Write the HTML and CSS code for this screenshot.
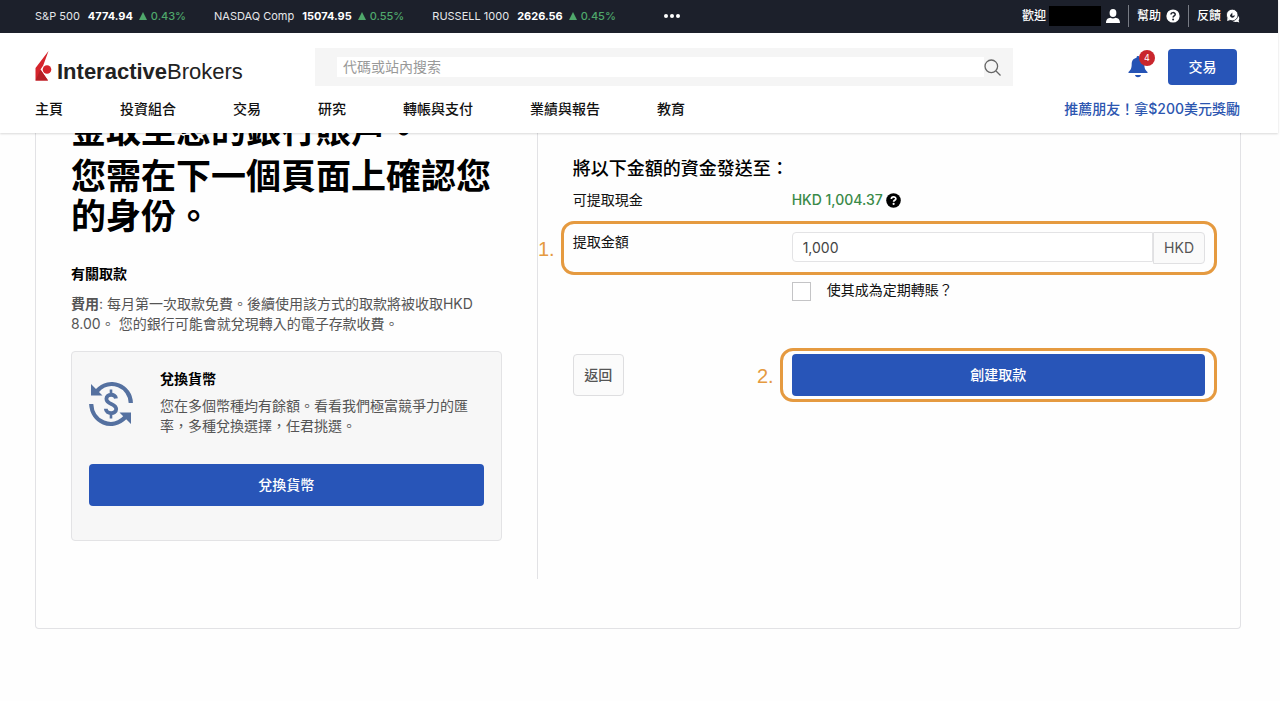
FILE: index.html
```html
<!DOCTYPE html>
<html lang="zh-Hant">
<head>
<meta charset="utf-8">
<meta name="viewport" content="width=device-width, initial-scale=1">
<title>InteractiveBrokers</title>
<link rel="stylesheet" href="styles.css">
</head>
<body>
<header class="header">
  <div class="topbar">
    <ul class="ticker">
      <li class="quote"><span>S&amp;P 500</span><b>4774.94</b><span class="up"><i class="arrow"></i>0.43%</span></li>
      <li class="quote"><span>NASDAQ Comp</span><b>15074.95</b><span class="up"><i class="arrow"></i>0.55%</span></li>
      <li class="quote"><span>RUSSELL 1000</span><b>2626.56</b><span class="up"><i class="arrow"></i>0.45%</span></li>
    </ul>
    <button class="more" type="button" aria-label="更多"><i class="dot"></i><i class="dot"></i><i class="dot"></i></button>
    <div class="account">
      <a class="account-link" href="#">歡迎<span class="username"></span>
        <svg width="14" height="14" viewBox="0 0 14 14" fill="#fff"><ellipse cx="7" cy="4" rx="3.4" ry="4"/><path d="M0 14c0-3.6 2-5 4.4-5.2 1.6 1 3.6 1 5.2 0C12 9 14 10.400 14 14z"/></svg>
      </a>
      <a class="account-link" href="#">幫助
        <svg width="14" height="14" viewBox="0 0 14 14"><circle cx="7" cy="7" r="6.600" fill="#fff"/><path d="M5 5.600c0-2.600 4.200-2.600 4.200-.2C9.200 6.900 7.100 6.900 7.100 8.400" fill="none" stroke="#1c202b" stroke-width="1.500"/><circle cx="7.100" cy="10.400" r="1" fill="#1c202b"/></svg>
      </a>
      <a class="account-link" href="#">反饋
        <svg width="14" height="14" viewBox="0 0 14 14"><path d="M11.800 6.500c1.800 1.600 1.800 3.600.8 4.900l.7 2-2.400-.7c-2 .6-3.900-.1-4.900-1.500" fill="#fff"/><circle cx="6.200" cy="6" r="5.800" fill="#fff" stroke="#1c202b" stroke-width=".8"/><path d="M1.500 8.500 1.200 12l3-1z" fill="#fff"/><path d="M4 6.300c0 3.200 4.800 3.200 4.800 0L6.400 7 6.300 3.600z" fill="#1c202b"/></svg>
      </a>
    </div>
  </div>
  <div class="brandbar">
    <a class="logo" href="#">
      <svg width="17" height="30" viewBox="0 0 17 30"><path d="M13.500 0 8.200 14.500 5.500 18.500 13 29.500H.5V17z" fill="#d5242c"/><path d="M.5 29.500 5.500 18.500l7.500 11z" fill="#b51f26"/><circle cx="12" cy="18.500" r="4.300" fill="#d5242c"/></svg>
      <span><b>Interactive</b>Brokers</span>
    </a>
    <form class="search">
      <input class="search-input" type="search" aria-label="代碼或站內搜索" placeholder="代碼或站內搜索">
      <button class="search-button" type="button" aria-label="搜索">
        <svg width="17" height="17" viewBox="0 0 17 17" fill="none" stroke="#666" stroke-width="1.300"><circle cx="7.300" cy="7.300" r="6.300"/><path d="m12 12 4.500 4.500"/></svg>
      </button>
    </form>
    <div class="actions">
      <button class="bell" type="button" aria-label="通知">
        <svg width="20" height="22" viewBox="0 0 20 22" fill="#2553b5"><path d="M10 0c1 0 1.500.7 1.500 1.700 3.500.8 4.800 3.400 4.800 6.300 0 4.500 1 6 3.200 8v1H.5v-1c2.200-2 3.200-3.500 3.200-8 0-2.900 1.300-5.500 4.800-6.300C8.500.7 9 0 10 0zM7 19h6c-.5 3-5.500 3-6 0z"/></svg>
        <span class="badge">4</span>
      </button>
      <button class="primary trade" type="button">交易</button>
    </div>
  </div>
  <nav class="nav">
    <a href="#">主頁</a><a href="#">投資組合</a><a href="#">交易</a><a href="#">研究</a><a href="#">轉帳與支付</a><a href="#">業績與報告</a><a href="#">教育</a>
    <a class="promo" href="#">推薦朋友！拿$200美元獎勵</a>
  </nav>
</header>
<main class="panel">
  <section class="info">
    <div class="headline">
      <p>金取至您的銀行賬戶。</p>
      <p>您需在下一個頁面上確認您的身份。</p>
    </div>
    <h2 class="subtitle">有關取款</h2>
    <p class="copy"><b>費用</b>: 每月第一次取款免費。後續使用該方式的取款將被收取HKD 8.00。 您的銀行可能會就兌現轉入的電子存款收費。</p>
    <div class="convert">
      <div class="convert-body">
        <svg class="convert-icon" width="44" height="44" viewBox="0 0 44 44"><g fill="none" stroke="#5571a0" stroke-width="4.200"><path d="M8 9C21-5 41.500 4 41.800 21"/><path d="M2.200 22C3 40 23 49 36.500 35"/></g><path d="M2 2v11.500h11.500z M42 42V30.500H30.500z" fill="#5571a0"/><path d="M27 16.500c-.5-5-9.600-5-9.600.2 0 6.200 9.800 4.200 9.800 10.400 0 5.500-10.300 5.200-10.400-.4" fill="none" stroke="#5571a0" stroke-width="3.800"/><path d="M22 7.500v6M22 30v6.500" fill="none" stroke="#5571a0" stroke-width="2.600"/></svg>
        <div>
          <h2 class="subtitle">兌換貨幣</h2>
          <p class="copy">您在多個幣種均有餘額。看看我們極富競爭力的匯率，多種兌換選擇，任君挑選。</p>
        </div>
      </div>
      <button class="primary wide" type="button">兌換貨幣</button>
    </div>
  </section>
  <form class="withdraw">
    <h2 class="form-title">將以下金額的資金發送至：</h2>
    <div class="row cash">
      <span>可提取現金</span>
      <span class="available">HKD 1,004.37
        <svg width="15" height="15" viewBox="0 0 14 14"><circle cx="7" cy="7" r="6.800" fill="#000"/><path d="M5 5.500c0-2.500 4.200-2.500 4.200-.1C9.200 6.800 7.100 6.800 7.100 8.200" fill="none" stroke="#fff" stroke-width="1.600"/><circle cx="7.100" cy="10.200" r="1" fill="#fff"/></svg>
      </span>
    </div>
    <div class="row amount">
      <label for="amount">提取金額</label>
      <div class="field"><input id="amount" class="amount-input" type="text" value="1,000"><span class="unit">HKD</span></div>
      <span class="step">1.</span>
    </div>
    <div class="row recurring">
      <span></span>
      <label class="check"><input class="box" type="checkbox"><span>使其成為定期轉賬？</span></label>
    </div>
    <div class="row buttons">
      <button class="back" type="button">返回</button>
      <div class="submit"><button class="primary wide" type="button">創建取款</button><span class="step">2.</span></div>
    </div>
  </form>
</main>
</body>
</html>
```
FILE: styles.css
```css
* { box-sizing: border-box; }
body {
  margin: 0;
  padding-right: 2px;
  background: #fefefe;
  color: #111;
  font: 14px/20px Inter, "Noto Sans CJK TC", sans-serif;
}
h1, h2, p, ul { margin: 0; padding: 0; }
a { color: inherit; text-decoration: none; }
button, input { font: inherit; margin: 0; }
button { padding: 0; border: 0; background: none; }
svg { display: block; flex: none; }

.header {
  position: relative;
  z-index: 1;
  background: #fff;
  box-shadow: 0 1px 2px rgba(0, 0, 0, .15);
}
.topbar {
  display: flex;
  align-items: center;
  height: 33px;
  padding: 0 38px 1px 35px;
  background: #1c202b;
  color: #e6e7ea;
  font-size: 11px;
}
.ticker { display: flex; gap: 28px; list-style: none; }
.quote { display: flex; gap: 8px; white-space: nowrap; }
.quote b { color: #fff; }
.up { display: flex; align-items: center; gap: 4px; color: #4fa86b; font-weight: 500; margin-left: -2px; }
.arrow { border: 4px solid transparent; border-top: 0; border-bottom: 8px solid #4fa86b; }
.more { display: flex; gap: 2px; margin-left: 48px; }
.dot { width: 4px; height: 4px; border-radius: 50%; background: #fff; }
.account { display: flex; margin-left: auto; color: #fff; font-size: 12px; }
.account-link { display: flex; align-items: center; gap: 5px; padding: 0 8px; height: 22px; font-weight: 500; }
.account-link:last-child { padding-right: 0; }
.account-link + .account-link { border-left: 1px solid #777b84; }
.username { width: 52px; height: 20px; margin-left: -2px; background: #000; }

.brandbar { display: flex; align-items: center; padding: 14px 41px 0 35px; }
.logo {
  display: flex;
  align-items: center;
  gap: 5px;
  width: 280px;
  color: #222;
  font: 22px/30px "Liberation Sans", Arial, sans-serif;
}
.logo svg { margin-bottom: 2px; }
.logo span { padding-top: 10px; }
.search { display: flex; flex: 1; align-items: center; height: 38px; padding: 0 12px 0 22px; background: #f5f5f5; }
.search-input { flex: 1; min-width: 0; height: 20px; padding: 0 6px; border: 0; background: #fff; color: #444; }
.search-input::placeholder { color: #999; }
.actions { display: flex; align-items: center; gap: 20px; margin-left: 115px; }
.bell { position: relative; }
.badge {
  position: absolute;
  top: -6px;
  right: -7px;
  width: 16px;
  height: 16px;
  border-radius: 50%;
  background: #c9262d;
  color: #fff;
  font-size: 9px;
  line-height: 16px;
}
.primary { border-radius: 4px; background: #2855b8; color: #fff; font-weight: 500; }
.trade { width: 69px; height: 36px; }
.nav { display: flex; gap: 57px; padding: 12px 38px 14px 35px; font-weight: 500; white-space: nowrap; }
.promo { margin-left: auto; color: #2c56b0; }

.panel {
  display: grid;
  grid-template-columns: 5fr 7fr;
  margin: 0 37px 0 35px;
  padding-bottom: 49px;
  border: 1px solid #e2e2e5;
  border-top: 0;
  border-radius: 0 0 4px 4px;
}
.info { padding: 0 35px 38px; border-right: 1px solid #e2e2e5; }
.headline { display: grid; gap: 6px; margin: -23px 0 28px; color: #000; font-size: 35px; line-height: 40px; font-weight: 700; }
.subtitle { margin-bottom: 10px; color: #000; font-size: 14px; line-height: 20px; font-weight: 700; }
.copy { color: #555; line-height: 20px; }
.convert { margin-top: 17px; padding: 17px 17px 34px; border: 1px solid #e3e3e5; border-radius: 4px; background: #f7f7f7; }
.convert-body { display: flex; gap: 27px; margin-bottom: 28px; }
.convert-body .subtitle { margin-bottom: 7px; }
.convert-icon { margin-top: 13px; }
.wide { display: block; width: 100%; height: 42px; }

.withdraw { padding: 26px 35px 0; }
.form-title { margin-bottom: 11px; color: #000; font-size: 18px; line-height: 20px; font-weight: 500; }
.row { display: grid; grid-template-columns: 219px 1fr; }
.available { display: flex; align-items: center; gap: 3px; color: #3a8a48; font-weight: 500; }
.amount { position: relative; margin-top: 22px; }
.field { display: flex; }
.amount-input { flex: 1; min-width: 0; height: 30px; padding: 0 10px; border: 1px solid #e3e3e5; border-radius: 4px 0 0 4px; background: #fff; color: #444; }
.unit { height: 32px; padding: 5px 10px; border: 1px solid #e0e0e2; border-radius: 0 4px 4px 0; background: #fafafa; color: #555; }
.recurring { margin-top: 16px; }
.check { display: flex; gap: 16px; }
.box { appearance: none; width: 19px; height: 19px; margin-top: 2px; border: 1px solid #c4c4c6; background: #fff; }
.buttons { margin-top: 53px; }
.back { width: 51px; height: 42px; border: 1px solid #dedee0; border-radius: 4px; background: #fbfbfb; color: #555; font-weight: 500; }
.submit { position: relative; }

/* Orange guide frames laid over the form */
.amount::after, .submit::after {
  content: "";
  position: absolute;
  inset: -11px -12px;
  border: 3px solid #e59a40;
  border-radius: 13px;
  pointer-events: none;
}
.submit::after { inset: -6px -12px; }
.step {
  position: absolute;
  top: 50%;
  right: 100%;
  margin: -11px 18px 0 0;
  color: #e59a40;
  font: 20px/24px "Liberation Sans", Arial, sans-serif;
}
```
